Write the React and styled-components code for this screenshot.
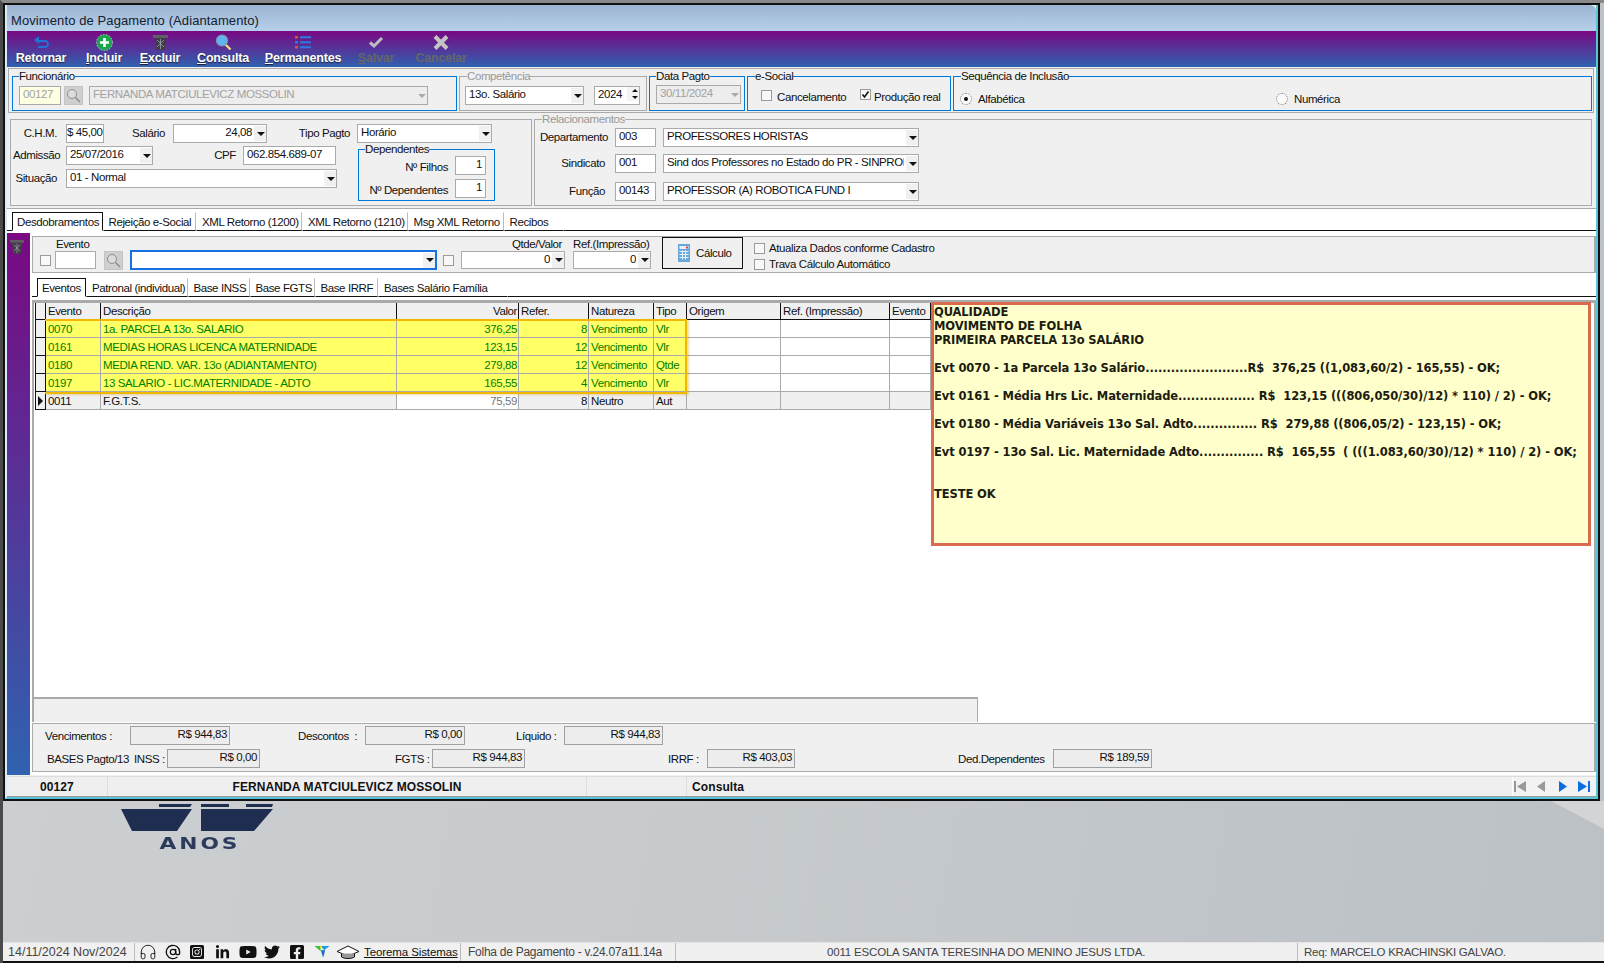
import styled, { createGlobalStyle } from 'styled-components';
import { Headphones, AtSign } from 'lucide-react';
import { FaInstagramSquare, FaLinkedinIn, FaYoutube, FaTwitter, FaFacebookSquare } from 'react-icons/fa';

const GlobalStyle = createGlobalStyle`
  html, body {
    margin: 0;
    padding: 0;
    background: #c6cacd;
  }
  body {
    font-family: "Liberation Sans", Arial, sans-serif;
    font-size: 11.5px;
    letter-spacing: -0.4px;
    color: #111;
  }
  * {
    box-sizing: border-box;
  }
`;

const Page = styled.div`
  width: 1604px;
  height: 963px;
  border-top: 3px solid #8a8a8a;
  border-left: 3px solid #4a4a4a;
  display: flex;
  flex-direction: column;
  overflow: hidden;
  background: linear-gradient(100deg, #cdd0d2 0%, #c6cacd 50%, #bcc1c6 100%);
`;

const Window = styled.div`
  flex: none;
  width: 1597px;
  height: 798px;
  border: 2px solid #111;
`;

const WindowInner = styled.div`
  height: 100%;
  display: flex;
  flex-direction: column;
  background: #f0f0f0;
  border-left: 2px solid #d8ecf4;
  border-right: 2px solid #58c4dc;
  border-bottom: 2px solid #58c4dc;
`;

const TitleBar = styled.div`
  flex: none;
  height: 26px;
  padding: 5px 0 0 4px;
  display: flex;
  align-items: center;
  font-size: 13px;
  letter-spacing: 0.1px;
  color: #14202c;
  border-top-right-radius: 6px;
  background: linear-gradient(#9cb4d1, #b6d0ea);
`;

const Toolbar = styled.div`
  flex: none;
  height: 36px;
  padding: 3px 0 0 2.5px;
  display: flex;
  background: linear-gradient(#7a0882, #2f62b0);
`;

const ToolButton = styled.div`
  flex: none;
  width: ${(p) => p.$w}px;
  display: flex;
  flex-direction: column;
  align-items: center;
  font-size: 12.5px;
  font-weight: bold;
  letter-spacing: -0.2px;
  line-height: 14px;
  white-space: nowrap;
  color: ${(p) => (p.$off ? '#666' : '#fff')};
  text-shadow: ${(p) => (p.$off ? 'none' : '0 1px 1px #223')};
  svg {
    display: block;
    height: 17px;
  }
`;

const TopPanel = styled.div`
  flex: none;
  height: 45px;
  margin: 1px 2px 0 1px;
  padding: 1px 0 0 3px;
  border: 1px solid #aaa;
  display: flex;
  gap: 2px;
`;

const Group = styled.fieldset`
  flex: none;
  margin: 0;
  margin-left: ${(p) => p.$ml || 0}px;
  width: ${(p) => p.$w}px;
  height: ${(p) => p.$h || 41}px;
  padding: ${(p) => p.$pad || '4px 0 0 6px'};
  border: 1px solid ${(p) => (p.$gray ? '#aaa' : '#0078d7')};
  display: flex;
  align-items: flex-start;
  min-inline-size: 0;
`;

const Legend = styled.legend`
  margin-left: ${(p) => p.$ml || 0}px;
  padding: 0;
  height: 12px;
  line-height: 12px;
  color: ${(p) => (p.$gray ? '#999' : '#111')};
`;

const SecondRow = styled.div`
  flex: none;
  height: 93px;
  margin-left: 3px;
  display: flex;
  align-items: flex-end;
  gap: 2px;
`;

const DataPanel = styled.div`
  flex: none;
  width: 522px;
  height: 87px;
  padding: 4px 0 0 2px;
  border: 1px solid #aaa;
`;

const FormRow = styled.div`
  display: flex;
  align-items: flex-start;
  margin-top: ${(p) => p.$mt || 0}px;
  margin-left: ${(p) => p.$ml || 0}px;
`;

const Stack = styled.div`
  flex: none;
  margin-top: ${(p) => p.$mt || 0}px;
`;

const FieldLabel = styled.div`
  flex: none;
  width: ${(p) => p.$w}px;
  height: 19px;
  margin-left: ${(p) => p.$ml || 0}px;
  margin-right: ${(p) => p.$mr || 0}px;
  line-height: ${(p) => p.$lh || 19}px;
  text-align: right;
  white-space: nowrap;
`;

const Box = styled.div`
  flex: none;
  width: ${(p) => p.$w}px;
  height: ${(p) => p.$h || 19}px;
  margin-left: ${(p) => p.$ml || 0}px;
  margin-top: ${(p) => p.$mt || 0}px;
  padding: 0 ${(p) => (p.$right ? 3 : 0)}px 3px ${(p) => (p.$right || p.$tight ? 0 : 3)}px;
  display: flex;
  align-items: center;
  justify-content: ${(p) => (p.$right ? 'flex-end' : 'flex-start')};
  overflow: hidden;
  white-space: nowrap;
  border: ${(p) => (p.$focus ? '2px solid #1670e0' : '1px solid #aaa')};
  background: ${(p) => (p.$off ? '#ededed' : p.$tint ? '#ffffe2' : '#fff')};
  color: ${(p) => (p.$off || p.$tint ? '#a2a2a2' : '#111')};
`;

const BoxText = styled.span`
  flex: 1;
  overflow: hidden;
  text-align: ${(p) => (p.$right ? 'right' : 'left')};
`;

const ArrowBtn = styled.span`
  flex: none;
  width: 14px;
  height: 15px;
  margin: 3px -2px 0 2px;
  display: flex;
  align-items: center;
  justify-content: center;
  background: ${(p) => (p.$off ? 'transparent' : '#f0f0f0')};
  &::after {
    content: '';
    border-left: 4px solid transparent;
    border-right: 4px solid transparent;
    border-top: 4px solid ${(p) => (p.$off ? '#aaa' : '#111')};
  }
`;

const SpinBtn = styled.span`
  flex: none;
  width: 15px;
  height: 100%;
  margin-left: auto;
  margin-right: -3px;
  display: flex;
  flex-direction: column;
  justify-content: space-around;
  align-items: center;
  background: #f4f4f4;
  font-size: 0;
  &::before {
    content: '';
    border-left: 3px solid transparent;
    border-right: 3px solid transparent;
    border-bottom: 3px solid #111;
  }
  &::after {
    content: '';
    border-left: 3px solid transparent;
    border-right: 3px solid transparent;
    border-top: 3px solid #111;
  }
`;

const SearchBtn = styled.div`
  flex: none;
  width: 19px;
  height: 19px;
  margin-left: ${(p) => p.$ml || 0}px;
  margin-top: ${(p) => p.$mt || 0}px;
  display: flex;
  align-items: center;
  justify-content: center;
  background: #cfcfcf;
  border: 1px solid #c4c4c4;
`;

const Check = styled.span`
  flex: none;
  width: 11px;
  height: 11px;
  margin-left: ${(p) => p.$ml || 0}px;
  margin-top: ${(p) => p.$mt || 0}px;
  display: flex;
  align-items: center;
  justify-content: center;
  background: #f8f8f8;
  border: 1px solid #9a9a9a;
`;

const Radio = styled.span`
  flex: none;
  width: 12px;
  height: 12px;
  margin-left: ${(p) => p.$ml || 0}px;
  margin-top: 1px;
  display: flex;
  align-items: center;
  justify-content: center;
  border-radius: 50%;
  background: #fafafa;
  border: 1px dotted #777;
  &::after {
    content: '';
    display: ${(p) => (p.$on ? 'block' : 'none')};
    width: 4px;
    height: 4px;
    border-radius: 50%;
    background: #111;
  }
`;

const OptionText = styled.span`
  flex: none;
  width: ${(p) => (p.$w ? `${p.$w}px` : 'auto')};
  margin-left: ${(p) => p.$ml || 5}px;
  line-height: 14px;
  white-space: nowrap;
`;

const TabBar = styled.div`
  flex: none;
  height: ${(p) => p.$h}px;
  margin-top: ${(p) => p.$mt || 0}px;
  padding-left: ${(p) => p.$pl}px;
  display: flex;
  align-items: flex-end;
  background: #fff;
  border-top: ${(p) => (p.$top ? '1px solid #aaa' : 'none')};
  border-bottom: 1px solid #111;
`;

const Tab = styled.div`
  flex: none;
  width: ${(p) => p.$w}px;
  height: 19px;
  margin-bottom: -1px;
  padding-left: ${(p) => (p.$on ? 4 : 5)}px;
  display: flex;
  align-items: center;
  white-space: nowrap;
  background: #fff;
  border: 1px solid ${(p) => (p.$on ? '#111' : 'transparent')};
  border-bottom-color: ${(p) => (p.$on ? '#fff' : '#111')};
  border-right-color: ${(p) => (p.$on ? '#111' : p.$last ? 'transparent' : '#bbb')};
  border-top-color: ${(p) => (p.$on ? '#111' : 'transparent')};
`;

const Body = styled.div`
  flex: none;
  height: 544px;
  display: flex;
  background: #fff;
`;

const SideStrip = styled.div`
  flex: none;
  width: 23px;
  margin-top: 2px;
  padding: 6px 0 0 3px;
  background: linear-gradient(#7a0882, #2f62b0);
`;

const Main = styled.div`
  flex: 1;
  min-width: 0;
  margin-left: 2px;
  padding-top: 5px;
  display: flex;
  flex-direction: column;
`;

const EventPanel = styled.div`
  flex: none;
  height: 37px;
  display: flex;
  align-items: flex-start;
  background: #f0f0f0;
  border: 1px solid #aaa;
  border-right-width: 2px;
`;

const EventCol = styled.div`
  flex: none;
  width: ${(p) => p.$w}px;
  margin-left: ${(p) => p.$ml || 0}px;
`;

const ColLabel = styled.div`
  height: 14px;
  line-height: 14px;
  padding-left: ${(p) => p.$pl || 0}px;
  padding-right: ${(p) => p.$pr || 0}px;
  text-align: ${(p) => (p.$right ? 'right' : 'left')};
  white-space: nowrap;
`;

const CalcButton = styled.div`
  flex: none;
  width: 81px;
  height: 32px;
  margin-left: 11px;
  display: flex;
  align-items: center;
  gap: 6px;
  padding-left: 15px;
  background: #f0f0f0;
  border: 1px solid #111;
`;

const CheckRow = styled.div`
  height: 16px;
  display: flex;
  align-items: center;
`;

const GridFrame = styled.div`
  flex: none;
  height: 422px;
  margin-top: 3px;
  position: relative;
  display: flex;
  flex-direction: column;
  background: #fff;
  border-top: 3px solid #aaa;
  border-left: 2px solid #aaa;
  border-right: 2px solid #aaa;
`;

const GridRow = styled.div`
  flex: none;
  margin-left: 1px;
  width: 896px;
  height: ${(p) => (p.$head ? 17 : 18)}px;
  display: grid;
  grid-template-columns: 11px 55px 296px 122px 70px 65px 33px 94px 109px 41px;
`;

const Cell = styled.div`
  padding: 0 ${(p) => (p.$right ? 1 : 2)}px 0 2px;
  display: flex;
  align-items: center;
  justify-content: ${(p) => (p.$right ? 'flex-end' : 'flex-start')};
  overflow: hidden;
  white-space: nowrap;
  background: ${(p) => p.$bg || '#fff'};
  color: ${(p) => p.$color || '#111'};
  border-right: 1px solid ${(p) => p.$line || '#aaa'};
  border-bottom: 1px solid ${(p) => p.$line || '#aaa'};
`;

const RowMark = styled.div`
  display: flex;
  align-items: center;
  justify-content: center;
  background: #f0f0f0;
  border-left: 1px solid #111;
  border-right: 1px solid #111;
  border-bottom: 1px solid #111;
  &::after {
    content: '';
    display: ${(p) => (p.$on ? 'block' : 'none')};
    border-top: 5px solid transparent;
    border-bottom: 5px solid transparent;
    border-left: 5px solid #111;
  }
`;

const RowHighlight = styled.div`
  position: absolute;
  top: 16px;
  left: 11px;
  width: 642px;
  height: 75px;
  border: 2px solid #f2b705;
  border-left-width: 0;
  box-shadow: 2px 1px 2px rgba(200, 150, 0, 0.35);
  pointer-events: none;
`;

const NotePanel = styled.div`
  position: absolute;
  top: -1px;
  left: 897px;
  width: 660px;
  height: 244px;
  padding: 0;
  background: #ffffcc;
  border: 3px solid #d9694f;
  font-family: "DejaVu Sans", Verdana, sans-serif;
  font-size: 11.5px;
  font-weight: bold;
  letter-spacing: -0.1px;
  line-height: 14px;
  color: #1c1c10;
`;

const NoteLine = styled.div`
  height: 14px;
  white-space: pre;
`;

const GridScroller = styled.div`
  flex: none;
  width: 944px;
  height: 25px;
  margin-top: auto;
  background: #f0f0f0;
  border-top: 2px solid #aaa;
  border-right: 1px solid #aaa;
`;

const Summary = styled.div`
  flex: none;
  height: 49px;
  margin-top: 1px;
  padding-top: 2px;
  background: #f0f0f0;
  border: 1px solid #aaa;
  border-right-width: 2px;
`;

const MoneyBox = styled.div`
  flex: none;
  width: ${(p) => p.$w}px;
  height: 19px;
  padding: 0 2px 3px 0;
  display: flex;
  align-items: center;
  justify-content: flex-end;
  background: #ededed;
  border: 1px solid #a0a0a0;
`;

const SummaryLabel = styled.div`
  flex: none;
  width: ${(p) => p.$w}px;
  height: 19px;
  margin-left: ${(p) => p.$ml || 0}px;
  line-height: 21px;
  white-space: nowrap;
`;

const StatusBar = styled.div`
  flex: none;
  height: 21px;
  margin-top: 1px;
  display: flex;
  align-items: center;
  background: #efefef;
  border-top: 1px solid #ddd;
  border-bottom: 1px solid #999;
  font-size: 12px;
  font-weight: bold;
  letter-spacing: 0.1px;
`;

const StatusCell = styled.div`
  flex: none;
  width: ${(p) => p.$w}px;
  height: 100%;
  display: flex;
  align-items: center;
  justify-content: ${(p) => (p.$center ? 'center' : 'flex-start')};
  padding-left: ${(p) => p.$pl || 0}px;
  white-space: nowrap;
  border-right: 1px solid ${(p) => (p.$plain ? 'transparent' : '#ddd')};
`;

const NavBar = styled.div`
  flex: none;
  margin-left: auto;
  width: 84px;
  height: 100%;
  display: flex;
  align-items: center;
  justify-content: space-between;
  padding: 0 6px 0 1px;
  background: #f2f2f2;
  border-left: 1px solid #fff;
`;

const Desktop = styled.div`
  flex: 1;
  position: relative;
  padding: 3px 0 0 118px;
  &::before {
    content: '';
    position: absolute;
    top: 0;
    right: 0;
    width: 53px;
    height: 28px;
    background: #d3d4d5;
    clip-path: polygon(0 0, 100% 0, 100% 100%);
  }
`;

const LogoText = styled.div`
  width: 152px;
  margin: 5px 0 0 3px;
  text-align: center;
  font-family: "DejaVu Sans", sans-serif;
  font-size: 15px;
  font-weight: bold;
  letter-spacing: 2px;
  line-height: 16px;
  color: #2c3a5c;
  transform: scaleX(1.45);
`;

const Footer = styled.div`
  flex: none;
  height: 21px;
  display: flex;
  background: #f0f0f0;
  border-top: 1px solid #e4e4e4;
  border-bottom: 2px solid #111;
  color: #444;
`;

const FootCell = styled.div`
  flex: none;
  width: ${(p) => p.$w}px;
  padding-left: ${(p) => p.$pl || 0}px;
  display: flex;
  align-items: center;
  white-space: nowrap;
  font-size: ${(p) => p.$fs || 11.5}px;
  letter-spacing: ${(p) => p.$ls || 0}px;
  border-right: 1px solid ${(p) => (p.$plain ? 'transparent' : '#bbb')};
`;

const IconSlot = styled.span`
  flex: none;
  width: ${(p) => p.$w}px;
  height: 100%;
  display: flex;
  align-items: center;
  justify-content: center;
  color: #111;
`;

const FootLink = styled.a`
  margin-left: 3px;
  font-size: 11.5px;
  letter-spacing: -0.1px;
  color: #111;
  text-decoration: underline;
`;

const ReturnIcon = () => (
  <svg width="18" viewBox="0 0 18 17">
    <path d="M7 2 2 6l5 4V8h5.5c1.6 0 2.5.7 2.5 2s-1 2-2.5 2H6v2h6.5c3 0 4.5-1.700 4.500-4s-1.500-4-4.500-4H7z" fill="#1f74d6" />
  </svg>
);

const PlusIcon = () => (
  <svg width="17" viewBox="0 0 17 17">
    <circle cx="8.500" cy="8.500" r="8" fill="#1aa64f" stroke="#e8efe8" strokeWidth="0.700" strokeDasharray="1.500 1.500" />
    <path d="M8.500 4v9M4 8.500h9" stroke="#fff" strokeWidth="2.600" />
  </svg>
);

const TrashIcon = ({ size = 15 }) => (
  <svg width={size} viewBox="0 0 15 17">
    <path d="M0 1h15v3H0z" fill="#5f5f62" />
    <path d="M2 4h11l-1.500 12h-8z" fill="#3f3d48" />
    <path d="M4 6l7 7M11 6l-7 7M7.500 5v10" stroke="#9a98a0" strokeWidth="0.900" />
  </svg>
);

const LensIcon = () => (
  <svg width="17" viewBox="0 0 17 17">
    <path d="M10.500 10.500 15.500 15.500" stroke="#f2d877" strokeWidth="2.400" />
    <circle cx="7" cy="6.500" r="5.500" fill="#62b4f0" stroke="#7d97ac" strokeWidth="1.200" />
  </svg>
);

const ListIcon = () => (
  <svg width="16" viewBox="0 0 16 17">
    <path d="M0 2h3v2.500H0z" fill="#e2502e" />
    <path d="M0 7h3v2.500H0z" fill="#2d7bdc" />
    <path d="M0 12h3v2.500H0z" fill="#e2502e" />
    <path d="M5 3.200h11M5 8.200h11M5 13.200h11" stroke="#2d7bdc" strokeWidth="2" />
  </svg>
);

const OkIcon = () => (
  <svg width="16" viewBox="0 0 16 17">
    <path d="M2 8.500 6 12 14 4" fill="none" stroke="#bdbdbd" strokeWidth="3" />
  </svg>
);

const CancelIcon = () => (
  <svg width="16" viewBox="0 0 16 17">
    <path d="M2 2.500 14 14.500M14 2.500 2 14.500" stroke="#c4c4c4" strokeWidth="4" />
  </svg>
);

const GlassIcon = () => (
  <svg width="15" height="15" viewBox="0 0 15 15">
    <circle cx="6" cy="6" r="4.500" fill="#dcdcdc" stroke="#8e8e8e" />
    <path d="M9.500 9.500 14 14" stroke="#8e8e8e" strokeWidth="1.600" />
  </svg>
);

const CalcIcon = () => (
  <svg width="12" height="18" viewBox="0 0 12 18">
    <path d="M0 0h12v18H0z" fill="#6aa8dc" />
    <path d="M1.500 2h9v3h-9z" fill="#e4f0fb" />
    <path d="M8 2.500h2v2H8z" fill="#d8482a" />
    <path d="M1.500 7.500h9M1.500 10.500h9M1.500 13.500h9M4.500 6.500v9M7.500 6.500v9" stroke="#e8f2fb" />
  </svg>
);

const Tick = () => (
  <svg width="9" height="9" viewBox="0 0 9 9">
    <path d="M1.500 4.500 3.500 7 7.500 1.500" fill="none" stroke="#111" strokeWidth="1.600" />
  </svg>
);

const NavIcon = ({ d, color }) => (
  <svg width="12" height="11" viewBox="0 0 12 11">
    <path d={d} fill={color} />
  </svg>
);

const Mortarboard = () => (
  <svg width="24" height="15" viewBox="0 0 24 15">
    <path d="M12 1 23 6.500 12 11 1 6.500z" fill="#fff" stroke="#111" />
    <path d="M5.500 8.500v3.500c3 2 10 2 13 0V8.500" fill="#999" stroke="#111" />
  </svg>
);

const TeoremaLogo = () => (
  <svg width="16" height="15" viewBox="0 0 14 14">
    <path d="M0 1h7L5 5z" fill="#f2e21c" />
    <path d="M0 1h5l1 5z" fill="#38c34a" />
    <path d="M6 1h8L9 5z" fill="#1c9be6" />
    <path d="M6 5h4l-2 7z" fill="#146cc4" />
  </svg>
);

const LogoMark = () => (
  <svg width="152" height="27" viewBox="0 0 152 27" style={{ display: 'block' }}>
    <path d="M38 0h33l-2 3H38zM80 0h28v3H80zM125 0h27l-1 3h-26z" fill="#1f2d50" />
    <path d="M0 5h71L56 27H11zM80 5h72l-19 22H80z" fill="#1f2d50" />
  </svg>
);

const Combo = ({ w, h, ml, mt, value, right, off, focus }) => (
  <Box $w={w} $h={h} $ml={ml} $mt={mt} $off={off} $focus={focus}>
    <BoxText $right={right}>{value}</BoxText>
    <ArrowBtn $off={off} />
  </Box>
);

const tools = [
  { w: 63, label: <>Retornar</>, icon: <ReturnIcon /> },
  { w: 63, label: <><u>I</u>ncluir</>, icon: <PlusIcon /> },
  { w: 49, label: <><u>E</u>xcluir</>, icon: <TrashIcon /> },
  { w: 77, label: <><u>C</u>onsulta</>, icon: <LensIcon /> },
  { w: 83, label: <><u>P</u>ermanentes</>, icon: <ListIcon /> },
  { w: 63, label: <><u>S</u>alvar</>, icon: <OkIcon />, off: true },
  { w: 67, label: <>Cancelar</>, icon: <CancelIcon />, off: true },
];

const mainTabs = [
  { w: 90.5, text: 'Desdobramentos', on: true },
  { w: 93.5, text: 'Rejeição e-Social' },
  { w: 106, text: 'XML Retorno (1200)' },
  { w: 105.5, text: 'XML Retorno (1210)' },
  { w: 96, text: 'Msg XML Retorno' },
  { w: 60, text: 'Recibos', last: true },
];

const subTabs = [
  { w: 49, text: 'Eventos', on: true },
  { w: 101.5, text: 'Patronal (individual)' },
  { w: 62, text: 'Base INSS' },
  { w: 65, text: 'Base FGTS' },
  { w: 63.5, text: 'Base IRRF' },
  { w: 130, text: 'Bases Salário Família', last: true },
];

const headers = ['Evento', 'Descrição', 'Valor', 'Refer.', 'Natureza', 'Tipo', 'Origem', 'Ref. (Impressão)', 'Evento'];

const events = [
  ['0070', '1a. PARCELA 13o. SALARIO', '376,25', '8', 'Vencimento', 'Vlr'],
  ['0161', 'MEDIAS HORAS LICENCA MATERNIDADE', '123,15', '12', 'Vencimento', 'Vlr'],
  ['0180', 'MEDIA REND. VAR. 13o (ADIANTAMENTO)', '279,88', '12', 'Vencimento', 'Qtde'],
  ['0197', '13 SALARIO - LIC.MATERNIDADE - ADTO', '165,55', '4', 'Vencimento', 'Vlr'],
];

const noteLines = [
  'QUALIDADE',
  'MOVIMENTO DE FOLHA',
  'PRIMEIRA PARCELA 13o SALÁRIO',
  '',
  'Evt 0070 - 1a Parcela 13o Salário........................R$  376,25 ((1,083,60/2) - 165,55) - OK;',
  '',
  'Evt 0161 - Média Hrs Lic. Maternidade.................. R$  123,15 (((806,050/30)/12) * 110) / 2) - OK;',
  '',
  'Evt 0180 - Média Variáveis 13o Sal. Adto............... R$  279,88 ((806,05/2) - 123,15) - OK;',
  '',
  'Evt 0197 - 13o Sal. Lic. Maternidade Adto............... R$  165,55  ( (((1.083,60/30)/12) * 110) / 2) - OK;',
  '',
  '',
  'TESTE OK',
];

const App = () => {
  return (
    <Page>
      <GlobalStyle />
      <Window>
        <WindowInner>
          <TitleBar>Movimento de Pagamento (Adiantamento)</TitleBar>

          <Toolbar>
            {tools.map((tool, i) => (
              <ToolButton key={i} $w={tool.w} $off={tool.off}>
                {tool.icon}
                <span>{tool.label}</span>
              </ToolButton>
            ))}
          </Toolbar>

          <TopPanel>
            <Group $w={445}>
              <Legend>Funcionário</Legend>
              <Box $w={42} $tint>00127</Box>
              <SearchBtn $ml={3}><GlassIcon /></SearchBtn>
              <Combo w={339} ml={6} value="FERNANDA MATCIULEVICZ MOSSOLIN" off />
            </Group>
            <Group $w={188} $gray $pad="4px 0 0 5px">
              <Legend $gray $ml={2}>Competência</Legend>
              <Combo w={119} value="13o. Salário" />
              <Box $w={46} $ml={10}>
                2024
                <SpinBtn />
              </Box>
            </Group>
            <Group $w={96} $pad="3px 0 0 6px">
              <Legend>Data Pagto</Legend>
              <Combo w={85} value="30/11/2024" off />
            </Group>
            <Group $w={204} $pad="8px 0 0 13px">
              <Legend $ml={-6}>e-Social</Legend>
              <Check />
              <OptionText $w={83}>Cancelamento</OptionText>
              <Check $mt={-1}><Tick /></Check>
              <OptionText $ml={3}>Produção real</OptionText>
            </Group>
            <Group $w={639} $pad="10px 0 0 6px">
              <Legend $ml={1}>Sequência de Inclusão</Legend>
              <Radio $on />
              <OptionText $ml={6} $w={298}>Alfabética</OptionText>
              <Radio />
              <OptionText $ml={6}>Numérica</OptionText>
            </Group>
          </TopPanel>

          <SecondRow>
            <DataPanel>
              <FormRow>
                <FieldLabel $w={44} $mr={9}>C.H.M.</FieldLabel>
                <Box $w={38} $tight>$ 45,00</Box>
                <FieldLabel $w={61} $mr={8}>Salário</FieldLabel>
                <Combo w={94} value="24,08" right />
                <FieldLabel $w={83} $mr={7}>Tipo Pagto</FieldLabel>
                <Combo w={135} value="Horário" />
              </FormRow>
              <FormRow>
                <Stack $mt={3}>
                  <FormRow>
                    <FieldLabel $w={44} $mr={9}>Admissão</FieldLabel>
                    <Combo w={87} value="25/07/2016" />
                    <FieldLabel $w={83} $mr={7}>CPF</FieldLabel>
                    <Box $w={93}>062.854.689-07</Box>
                  </FormRow>
                  <FormRow $mt={4}>
                    <FieldLabel $w={44} $mr={9}>Situação</FieldLabel>
                    <Combo w={271} value="01 - Normal" />
                  </FormRow>
                </Stack>
                <Group $w={137} $h={58} $ml={21} $pad="1px 0 0 9px">
                  <Legend $ml={-3}>Dependentes</Legend>
                  <Stack>
                    <FormRow>
                      <FieldLabel $w={80} $mr={7} $lh={23}>Nº Filhos</FieldLabel>
                      <Box $w={31} $right>1</Box>
                    </FormRow>
                    <FormRow $mt={4}>
                      <FieldLabel $w={80} $mr={7} $lh={22}>Nº Dependentes</FieldLabel>
                      <Box $w={31} $right>1</Box>
                    </FormRow>
                  </Stack>
                </Group>
              </FormRow>
            </DataPanel>

            <Group $w={1058} $h={93} $gray $pad="3px 0 0 0">
              <Legend $gray $ml={7}>Relacionamentos</Legend>
              <Stack>
                <FormRow>
                  <FieldLabel $w={73} $mr={7}>Departamento</FieldLabel>
                  <Box $w={41}>003</Box>
                  <Combo w={256} ml={7} value="PROFESSORES HORISTAS" />
                </FormRow>
                <FormRow $mt={7}>
                  <FieldLabel $w={70} $mr={10}>Sindicato</FieldLabel>
                  <Box $w={41}>001</Box>
                  <Combo w={256} ml={7} value="Sind dos Professores no Estado do PR - SINPROF" />
                </FormRow>
                <FormRow $mt={9}>
                  <FieldLabel $w={70} $mr={10}>Função</FieldLabel>
                  <Box $w={41}>00143</Box>
                  <Combo w={256} ml={7} value="PROFESSOR (A) ROBOTICA FUND I" />
                </FormRow>
              </Stack>
            </Group>
          </SecondRow>

          <TabBar $h={23} $mt={2} $pl={5} $top>
            {mainTabs.map((tab) => (
              <Tab key={tab.text} $w={tab.w} $on={tab.on} $last={tab.last}>{tab.text}</Tab>
            ))}
          </TabBar>

          <Body>
            <SideStrip><TrashIcon size={14} /></SideStrip>
            <Main>
              <EventPanel>
                <EventCol $w={56} $ml={7}>
                  <ColLabel $pl={16}>Evento</ColLabel>
                  <FormRow>
                    <Check $mt={4} />
                    <Box $w={41} $h={18} $ml={4} />
                  </FormRow>
                </EventCol>
                <SearchBtn $ml={8} $mt={14}><GlassIcon /></SearchBtn>
                <Combo w={307} h={20} ml={7} mt={13} focus />
                <Check $ml={6} $mt={18} />
                <EventCol $w={104} $ml={7}>
                  <ColLabel $right $pr={3}>Qtde/Valor</ColLabel>
                  <Combo h={18} value="0" right />
                </EventCol>
                <EventCol $w={78} $ml={8}>
                  <ColLabel>Ref.(Impressão)</ColLabel>
                  <Combo h={18} value="0" right />
                </EventCol>
                <CalcButton><CalcIcon />Cálculo</CalcButton>
                <EventCol $w={200} $ml={11}>
                  <Stack $mt={3}>
                    <CheckRow>
                      <Check />
                      <OptionText $ml={4}>Atualiza Dados conforme Cadastro</OptionText>
                    </CheckRow>
                    <CheckRow>
                      <Check />
                      <OptionText $ml={4}>Trava Cálculo Automático</OptionText>
                    </CheckRow>
                  </Stack>
                </EventCol>
              </EventPanel>

              <TabBar $h={22} $mt={2} $pl={5}>
                {subTabs.map((tab) => (
                  <Tab key={tab.text} $w={tab.w} $on={tab.on} $last={tab.last}>{tab.text}</Tab>
                ))}
              </TabBar>

              <GridFrame>
                <GridRow $head>
                  <RowMark />
                  {headers.map((text, i) => (
                    <Cell key={i} $bg="#f0f0f0" $line="#111" $right={text === 'Valor'}>{text}</Cell>
                  ))}
                </GridRow>
                {events.map((row) => (
                  <GridRow key={row[0]}>
                    <RowMark />
                    {row.map((text, i) => (
                      <Cell key={i} $bg="#ffff66" $color="#008000" $right={i === 2 || i === 3}>{text}</Cell>
                    ))}
                    <Cell />
                    <Cell />
                    <Cell />
                  </GridRow>
                ))}
                <GridRow>
                  <RowMark $on />
                  <Cell $bg="#f0f0f0">0011</Cell>
                  <Cell $bg="#f0f0f0">F.G.T.S.</Cell>
                  <Cell $right $color="#777">75,59</Cell>
                  <Cell $bg="#f0f0f0" $right>8</Cell>
                  <Cell $bg="#f0f0f0">Neutro</Cell>
                  <Cell $bg="#f0f0f0">Aut</Cell>
                  <Cell $bg="#f0f0f0" />
                  <Cell $bg="#f0f0f0" />
                  <Cell $bg="#f0f0f0" />
                </GridRow>

                <RowHighlight />
                <NotePanel>
                  {noteLines.map((line, i) => (
                    <NoteLine key={i}>{line}</NoteLine>
                  ))}
                </NotePanel>

                <GridScroller />
              </GridFrame>

              <Summary>
                <FormRow>
                  <SummaryLabel $w={85} $ml={12}>Vencimentos :</SummaryLabel>
                  <MoneyBox $w={100}>R$ 944,83</MoneyBox>
                  <SummaryLabel $w={67} $ml={68}>Descontos&nbsp;&nbsp;:</SummaryLabel>
                  <MoneyBox $w={100}>R$ 0,00</MoneyBox>
                  <SummaryLabel $w={48} $ml={51}>Líquido :</SummaryLabel>
                  <MoneyBox $w={99}>R$ 944,83</MoneyBox>
                </FormRow>
                <FormRow $mt={4}>
                  <SummaryLabel $w={87} $ml={14}>BASES Pagto/13</SummaryLabel>
                  <SummaryLabel $w={33}>INSS :</SummaryLabel>
                  <MoneyBox $w={93}>R$ 0,00</MoneyBox>
                  <SummaryLabel $w={37} $ml={135}>FGTS :</SummaryLabel>
                  <MoneyBox $w={93}>R$ 944,83</MoneyBox>
                  <SummaryLabel $w={39} $ml={143}>IRRF :</SummaryLabel>
                  <MoneyBox $w={88}>R$ 403,03</MoneyBox>
                  <SummaryLabel $w={95} $ml={163}>Ded.Dependentes</SummaryLabel>
                  <MoneyBox $w={99}>R$ 189,59</MoneyBox>
                </FormRow>
              </Summary>
            </Main>
          </Body>

          <StatusBar>
            <StatusCell $w={101} $pl={33}>00127</StatusCell>
            <StatusCell $w={479} $center>FERNANDA MATCIULEVICZ MOSSOLIN</StatusCell>
            <StatusCell $w={100} />
            <StatusCell $w={300} $pl={5} $plain>Consulta</StatusCell>
            <NavBar>
              <NavIcon d="M0 0h2v11H0zM12 0v11L3 5.500z" color="#999" />
              <NavIcon d="M10 0v11L2 5.500z" color="#999" />
              <NavIcon d="M2 0v11l8-5.500z" color="#0a6ee0" />
              <NavIcon d="M0 0v11l9-5.500zM10 0h2v11h-2z" color="#0a6ee0" />
            </NavBar>
          </StatusBar>
        </WindowInner>
      </Window>

      <Desktop>
        <LogoMark />
        <LogoText>ANOS</LogoText>
      </Desktop>

      <Footer>
        <FootCell $w={132} $pl={5} $fs={12.5}>14/11/2024 Nov/2024</FootCell>
        <FootCell $w={326} $fs={12}>
          <IconSlot $w={26}><Headphones size={18} strokeWidth={1.200} /></IconSlot>
          <IconSlot $w={24}><AtSign size={16} strokeWidth={2} /></IconSlot>
          <IconSlot $w={24}><FaInstagramSquare size={16} /></IconSlot>
          <IconSlot $w={27}><FaLinkedinIn size={15} /></IconSlot>
          <IconSlot $w={24}><FaYoutube size={18} /></IconSlot>
          <IconSlot $w={24}><FaTwitter size={16} /></IconSlot>
          <IconSlot $w={25}><FaFacebookSquare size={16} /></IconSlot>
          <IconSlot $w={26}><TeoremaLogo /></IconSlot>
          <IconSlot $w={26}><Mortarboard /></IconSlot>
          <FootLink>Teorema Sistemas</FootLink>
        </FootCell>
        <FootCell $w={215} $pl={7} $fs={12} $ls={-0.26}>Folha de Pagamento - v.24.07a11.14a</FootCell>
        <FootCell $w={622} $pl={151} $ls={-0.18}>0011 ESCOLA SANTA TERESINHA DO MENINO JESUS LTDA.</FootCell>
        <FootCell $w={300} $pl={6} $ls={-0.26} $plain>Req: MARCELO KRACHINSKI GALVAO.</FootCell>
      </Footer>
    </Page>
  );
};

export default App;
